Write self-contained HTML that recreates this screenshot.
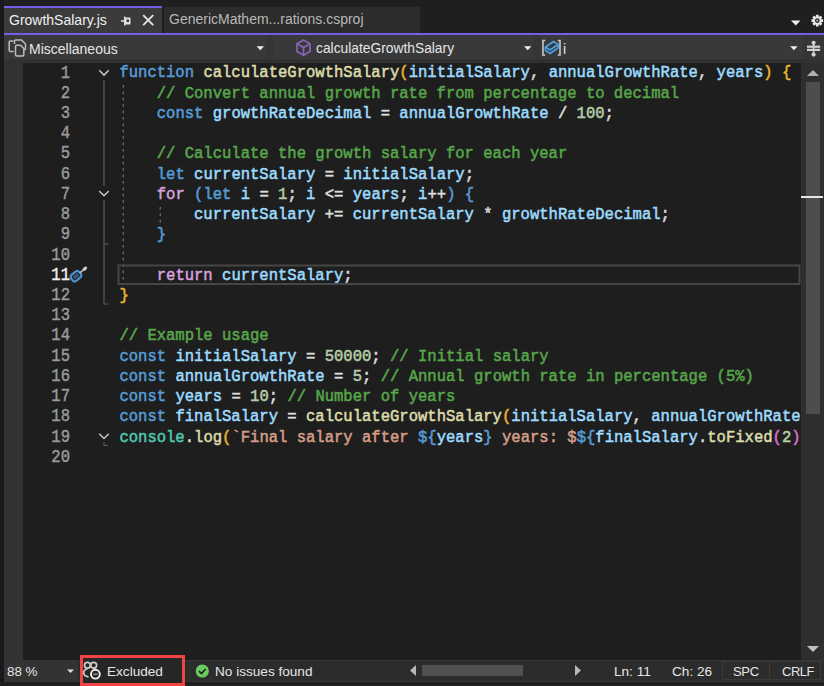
<!DOCTYPE html>
<html><head><meta charset="utf-8">
<style>
*{margin:0;padding:0;box-sizing:border-box}
html,body{width:824px;height:686px;overflow:hidden;background:#1f1f1f}
body{position:relative;font-family:"Liberation Sans",sans-serif;color:#e0e0e0}
.abs{position:absolute}
/* tab bar */
#tabbar{left:0;top:0;width:824px;height:33px;background:#1f1f1f}
#leftstrip{left:0;top:0;width:4px;height:686px;background:#1a1a1a}
#tab1{left:4px;top:6px;width:158px;height:27px;background:#3b3b3b;border-top:2px solid #7160e8}
#tab1 .t{left:5px;top:4px;font-size:14px;color:#f0f0f0;white-space:nowrap}
#tab2{left:164px;top:7px;width:256px;height:26px;background:#2c2c2c}
#tab2 .t{left:5px;top:4px;font-size:14px;color:#b8b8b8;white-space:nowrap}
#purple{left:4px;top:33px;width:820px;height:2px;background:#7160e8}
/* nav bar */
#nav{left:4px;top:35px;width:820px;height:24px;background:#393939}
#navb{left:4px;top:59px;width:820px;height:4px;background:#313131}
.dd{top:35px;height:24px;background:#393939}
.sep{top:35px;height:24px;width:7px;background:#353535}
.navt{font-size:14px;color:#e6e6e6;white-space:nowrap;top:4px}
.arrow{width:0;height:0;border-left:5px solid transparent;border-right:5px solid transparent;border-top:5px solid #e8e8e8}
/* editor */
#editor{left:4px;top:63px;width:797px;height:597px;background:#1e1e1e}
#margin{left:4px;top:63px;width:19px;height:597px;background:#323232}
#code{left:0;top:62.4px;width:824px}
.ln{position:absolute;margin-top:-0.9px;left:23px;width:47px;text-align:right;transform:scaleY(1.15);transform-origin:0 3px;-webkit-text-stroke:0.4px currentColor;font-family:"Liberation Mono",monospace;font-size:15.55px;color:#9a9a9a;height:20.23px;line-height:20.23px}
.cl{position:absolute;left:119.4px;transform:scaleY(1.1);transform-origin:0 3px;-webkit-text-stroke:0.5px currentColor;font-family:"Liberation Mono",monospace;font-size:15.55px;white-space:pre;height:20.23px;line-height:20.23px;color:#dcdcdc}
.k{color:#569cd6}.c{color:#d8a0df}.f{color:#dcdcaa}.v{color:#9cdcfe}.m{color:#57a64a}.n{color:#b5cea8}.s{color:#d69d85}.o{color:#b4b4b4}.t{color:#4ec9b0}.g{color:#ebb42e}.p{color:#da70d6}.b{color:#569cd6}
/* scrollbar */
#vs{left:801px;top:63px;width:23px;height:597px;background:#2e2e2e}
#thumb{left:806px;top:82px;width:14px;height:332px;background:#4d4d4d}
#caretmark{left:801px;top:196px;width:22px;height:2px;background:#e8e8e8}
/* status */
#status{left:4px;top:660px;width:820px;height:22px;background:#2c2c2c}
#statusb{left:0;top:682px;width:824px;height:4px;background:#1f1f1f}
.st{font-size:14px;color:#e6e6e6;white-space:nowrap}
</style></head><body>
<div id="tabbar" class="abs"></div>
<div id="tab1" class="abs"><div class="abs t">GrowthSalary.js</div></div>
<div id="tab2" class="abs"><div class="abs t">GenericMathem...rations.csproj</div></div>
<div id="purple" class="abs"></div>
<div id="leftstrip" class="abs"></div>

<div id="nav" class="abs"></div>
<div id="navb" class="abs"></div>
<div class="abs sep" style="left:266px"></div>
<div class="abs sep" style="left:533px"></div>
<div class="abs sep" style="left:802px;width:22px"></div>
<div class="abs navt" style="left:29px;top:41px">Miscellaneous</div>
<div class="abs navt" style="left:316px;top:41px;font-size:13.8px">calculateGrowthSalary</div>
<div class="abs navt" style="left:563px;top:41px">i</div>
<div id="editor" class="abs"></div>
<div id="margin" class="abs"></div>
<div id="vs" class="abs"></div>
<div id="thumb" class="abs"></div>
<div id="caretmark" class="abs"></div>

<div id="code" class="abs">
<div class="ln" style="top:0.0px">1</div>
<div class="ln" style="top:20.23px">2</div>
<div class="ln" style="top:40.46px">3</div>
<div class="ln" style="top:60.69px">4</div>
<div class="ln" style="top:80.92px">5</div>
<div class="ln" style="top:101.15px">6</div>
<div class="ln" style="top:121.38px">7</div>
<div class="ln" style="top:141.61px">8</div>
<div class="ln" style="top:161.84px">9</div>
<div class="ln" style="top:182.07px">10</div>
<div class="ln" style="top:202.3px;color:#f0f0f0">11</div>
<div class="ln" style="top:222.53px">12</div>
<div class="ln" style="top:242.76px">13</div>
<div class="ln" style="top:262.99px">14</div>
<div class="ln" style="top:283.22px">15</div>
<div class="ln" style="top:303.45px">16</div>
<div class="ln" style="top:323.68px">17</div>
<div class="ln" style="top:343.91px">18</div>
<div class="ln" style="top:364.14px">19</div>
<div class="ln" style="top:384.37px">20</div>

<div class="cl" style="top:0.0px"><span class="k">function</span> <span class="f">calculateGrowthSalary</span><span class="g">(</span><span class="v">initialSalary</span>, <span class="v">annualGrowthRate</span>, <span class="v">years</span><span class="g">)</span> <span class="g">{</span></div>
<div class="cl" style="top:20.23px">    <span class="m">// Convert annual growth rate from percentage to decimal</span></div>
<div class="cl" style="top:40.46px">    <span class="k">const</span> <span class="v">growthRateDecimal</span> = <span class="v">annualGrowthRate</span> / <span class="n">100</span>;</div>
<div class="cl" style="top:80.92px">    <span class="m">// Calculate the growth salary for each year</span></div>
<div class="cl" style="top:101.15px">    <span class="k">let</span> <span class="v">currentSalary</span> = <span class="v">initialSalary</span>;</div>
<div class="cl" style="top:121.38px">    <span class="c">for</span> <span class="b">(</span><span class="k">let</span> <span class="v">i</span> = <span class="n">1</span>; <span class="v">i</span> &lt;= <span class="v">years</span>; <span class="v">i</span>++<span class="b">)</span> <span class="b">{</span></div>
<div class="cl" style="top:141.61px">        <span class="v">currentSalary</span> += <span class="v">currentSalary</span> * <span class="v">growthRateDecimal</span>;</div>
<div class="cl" style="top:161.84px">    <span class="b">}</span></div>
<div class="cl" style="top:202.3px">    <span class="c">return</span> <span class="v">currentSalary</span>;</div>
<div class="cl" style="top:222.53px"><span class="g">}</span></div>
<div class="cl" style="top:262.99px"><span class="m">// Example usage</span></div>
<div class="cl" style="top:283.22px"><span class="k">const</span> <span class="v">initialSalary</span> = <span class="n">50000</span>; <span class="m">// Initial salary</span></div>
<div class="cl" style="top:303.45px"><span class="k">const</span> <span class="v">annualGrowthRate</span> = <span class="n">5</span>; <span class="m">// Annual growth rate in percentage (5%)</span></div>
<div class="cl" style="top:323.68px"><span class="k">const</span> <span class="v">years</span> = <span class="n">10</span>; <span class="m">// Number of years</span></div>
<div class="cl" style="top:343.91px"><span class="k">const</span> <span class="v">finalSalary</span> = <span class="f">calculateGrowthSalary</span><span class="g">(</span><span class="v">initialSalary</span>, <span class="v">annualGrowthRate</span></div>
<div class="cl" style="top:364.14px"><span class="t">console</span>.<span class="f">log</span><span class="g">(</span><span class="s">`Final salary after </span><span class="b">${</span><span class="v">years</span><span class="b">}</span><span class="s"> years: $</span><span class="b">${</span><span class="v">finalSalary</span>.<span class="f">toFixed</span><span class="p">(</span><span class="n">2</span><span class="p">)</span></div>
</div>

<div id="status" class="abs"></div>
<div id="statusb" class="abs"></div>
<div class="abs" style="left:4px;top:660px;width:820px;height:1px;background:#353535"></div>
<div class="abs" style="left:4px;top:681px;width:820px;height:1px;background:#353535"></div>
<div class="abs" style="left:4px;top:661px;width:74px;height:20px;background:#333333"></div>
<div class="abs st" style="left:7px;top:664.2px;font-size:13.4px">88 %</div>
<div class="abs" style="left:80px;top:655px;width:105px;height:31px;border:3px solid #ee4444;background:#262626"></div>
<div class="abs st" style="left:107px;top:664.2px;font-size:13.6px">Excluded</div>
<div class="abs st" style="left:215px;top:664.2px;font-size:13.6px">No issues found</div>
<div class="abs" style="left:422px;top:665px;width:101px;height:11px;background:#505050"></div>
<div class="abs st" style="left:614px;top:664.2px;font-size:13.6px">Ln: 11</div>
<div class="abs st" style="left:672px;top:664.2px;font-size:13.6px">Ch: 26</div>
<div class="abs" style="left:722px;top:661px;width:48px;height:19px;border:1px solid #3a3a3a"></div>
<div class="abs" style="left:769px;top:661px;width:52px;height:19px;border:1px solid #3a3a3a"></div>
<div class="abs st" style="left:733px;top:664.2px;font-size:13px;letter-spacing:-0.3px">SPC</div>
<div class="abs st" style="left:782px;top:664.2px;font-size:13px;letter-spacing:-0.5px">CRLF</div>
<svg class="abs" style="left:0;top:0" width="824" height="686" viewBox="0 0 824 686">
<!-- tab pin -->
<g fill="#e0e0e0">
<rect x="125" y="17.5" width="5.5" height="7" rx="0.5"/>
<rect x="121" y="20.2" width="4.5" height="1.6"/>
<rect x="124" y="16.5" width="1.5" height="9"/>
</g>
<rect x="126.5" y="19.5" width="2.5" height="2.5" fill="#3b3b3b"/>
<!-- close X -->
<path d="M143.2 15.2 L153.2 25.2 M153.2 15.2 L143.2 25.2" stroke="#e8e8e8" stroke-width="1.8"/>
<!-- tab bar dropdown + gear -->
<path d="M791 20.5 L800.5 20.5 L795.75 25.5 Z" fill="#f0f0f0"/>
<g transform="translate(817.3 20.6)">
<path d="M-1.68 -4.07 L-1.30 -4.20 L-1.31 -5.86 L1.31 -5.86 L1.30 -4.20 L1.68 -4.07 L2.05 -3.89 L3.21 -5.07 L5.07 -3.21 L3.89 -2.05 L4.07 -1.68 L4.20 -1.30 L5.86 -1.31 L5.86 1.31 L4.20 1.30 L4.07 1.68 L3.89 2.05 L5.07 3.21 L3.21 5.07 L2.05 3.89 L1.68 4.07 L1.30 4.20 L1.31 5.86 L-1.31 5.86 L-1.30 4.20 L-1.68 4.07 L-2.05 3.89 L-3.21 5.07 L-5.07 3.21 L-3.89 2.05 L-4.07 1.68 L-4.20 1.30 L-5.86 1.31 L-5.86 -1.31 L-4.20 -1.30 L-4.07 -1.68 L-3.89 -2.05 L-5.07 -3.21 L-3.21 -5.07 L-2.05 -3.89 Z" fill="#e8e8e8"/>
<circle r="2.3" fill="#222"/><circle r="1.0" fill="#c8c8c8"/>
</g>
<!-- nav: misc docs icon -->
<g fill="none" stroke="#bdbdbd" stroke-width="1.5">
<path d="M13.5 51.5 L10.5 51.5 Q9.2 51.5 9.2 50.2 L9.2 42.3 Q9.2 41 10.5 41 L13.5 41"/>
<path d="M14.5 44 L14.5 41.3 Q14.5 40 15.8 40 L21.5 40 L25.5 44 L25.5 48.5 Q25.5 49.8 24.2 49.8 L23.5 49.8"/>
<path d="M15.8 45.2 L20.5 45.2 L23.8 48.5 L23.8 54.8 Q23.8 56 22.5 56 L16.8 56 Q15.5 56 15.5 54.8 L15.5 46.5 Q15.5 45.2 16.8 45.2"/>
</g>
<!-- nav dropdown arrows -->
<path d="M256.6 46.2 L264 46.2 L260.3 50.2 Z" fill="#f0f0f0"/>
<path d="M524 46.2 L531.4 46.2 L527.7 50.2 Z" fill="#f0f0f0"/>
<path d="M790.2 46.2 L797.6 46.2 L793.9 50.2 Z" fill="#f0f0f0"/>
<!-- cube icon -->
<g fill="none" stroke="#8664b9" stroke-width="1.7" stroke-linejoin="round">
<path d="M303.5 40 L310 43.7 L310 51.5 L303.5 55.3 L297 51.5 L297 43.7 Z"/>
<path d="M297 43.7 L303.5 47.5 L310 43.7 M303.5 47.5 L303.5 55.3"/>
</g>
<!-- variable icon -->
<g fill="none" stroke="#c8c8c8" stroke-width="1.6">
<path d="M545.2 40.5 L543 40.5 L543 55 L545.2 55"/>
<path d="M557.8 40.5 L560 40.5 L560 55 L557.8 55"/>
</g>
<g fill="none" stroke="#4a9de0" stroke-width="1.8" stroke-linejoin="round">
<path d="M545.5 47 L553.5 41.5 L558 44.5 L550 50 Z"/>
<path d="M545.5 47 L545.5 50.5 L550 53.5 L558 48 L558 44.5"/>
</g>
<!-- split icon -->
<g fill="#d0d0d0">
<rect x="812.8" y="42" width="1.6" height="13"/>
<circle cx="813.6" cy="42.8" r="2.1"/>
<circle cx="813.6" cy="54.6" r="2.1"/>
<rect x="807" y="45.6" width="13.2" height="2.2"/>
<rect x="807" y="48.8" width="13.2" height="2.2"/>
</g>
<!-- fold margin -->
<g fill="none" stroke="#c8c8c8" stroke-width="1.5">
<path d="M99.2 70.3 L104 75.1 L108.8 70.3"/>
<path d="M99.2 191 L104 195.8 L108.8 191"/>
<path d="M99.2 433.7 L104 438.5 L108.8 433.7"/>
</g>
<g fill="none" stroke="#5a5a5a" stroke-width="1.2">
<path d="M104 80 L104 186"/>
<path d="M104 200 L104 304 L108.5 304"/>
<path d="M104 244 L108.5 244"/>
<path d="M104 442 L104 445.5 L108 445.5"/>
</g>
<!-- indent guides -->
<path d="M123.3 85 L123.3 282" stroke="#6a6a6a" stroke-width="1.4" stroke-dasharray="2.6 3.8"/>
<path d="M160.3 207 L160.3 226" stroke="#6a6a6a" stroke-width="1.4" stroke-dasharray="2.6 3.8"/>
<!-- current line box -->
<rect x="118.5" y="265.5" width="681" height="18.5" fill="none" stroke="#464646" stroke-width="2"/>
<!-- screwdriver -->
<g transform="translate(76 276.2) rotate(-40)">
<rect x="-5.2" y="-3.8" width="10.4" height="7.6" rx="2.6" fill="none" stroke="#4b92d0" stroke-width="2.2"/>
<rect x="-3" y="-1.8" width="6" height="3.6" fill="#35597a"/>
<path d="M5 0 L9 0" stroke="#bdbdbd" stroke-width="1.6"/>
<ellipse cx="11.5" cy="0" rx="2.8" ry="1.6" fill="#d0d0d0"/>
</g>
<!-- scrollbar arrows -->
<path d="M807 76 L819 76 L813 70 Z" fill="#b0b0b0"/>
<path d="M807 646 L819 646 L813 652 Z" fill="#c0c0c0"/>
<!-- status bar -->
<path d="M67 669.5 L74 669.5 L70.5 673 Z" fill="#e0e0e0"/>
<path d="M416 665 L416 676 L410 670.5 Z" fill="#b8b8b8"/>
<path d="M575 665 L575 676 L581 670.5 Z" fill="#b8b8b8"/>
<!-- excluded icon -->
<g fill="none" stroke="#cfcfcf" stroke-width="1.7">
<circle cx="87.4" cy="665.3" r="2.9"/>
<circle cx="93.7" cy="665.3" r="2.9"/>
<path d="M87.5 668.8 Q83.6 669.8 83.6 672.8 Q83.8 676.2 88.5 676.8"/>
</g>
<circle cx="95.4" cy="674.2" r="4.4" fill="#262626" stroke="#f2f2f2" stroke-width="1.9"/>
<rect x="93.3" y="673.4" width="4.2" height="1.7" fill="#8a8a8a"/>
<!-- green check -->
<circle cx="202.3" cy="671" r="6.6" fill="#6ccb5f"/>
<path d="M199 671.2 L201.5 673.6 L205.6 669" fill="none" stroke="#1e1e1e" stroke-width="1.7"/>
</svg>
</body></html>
